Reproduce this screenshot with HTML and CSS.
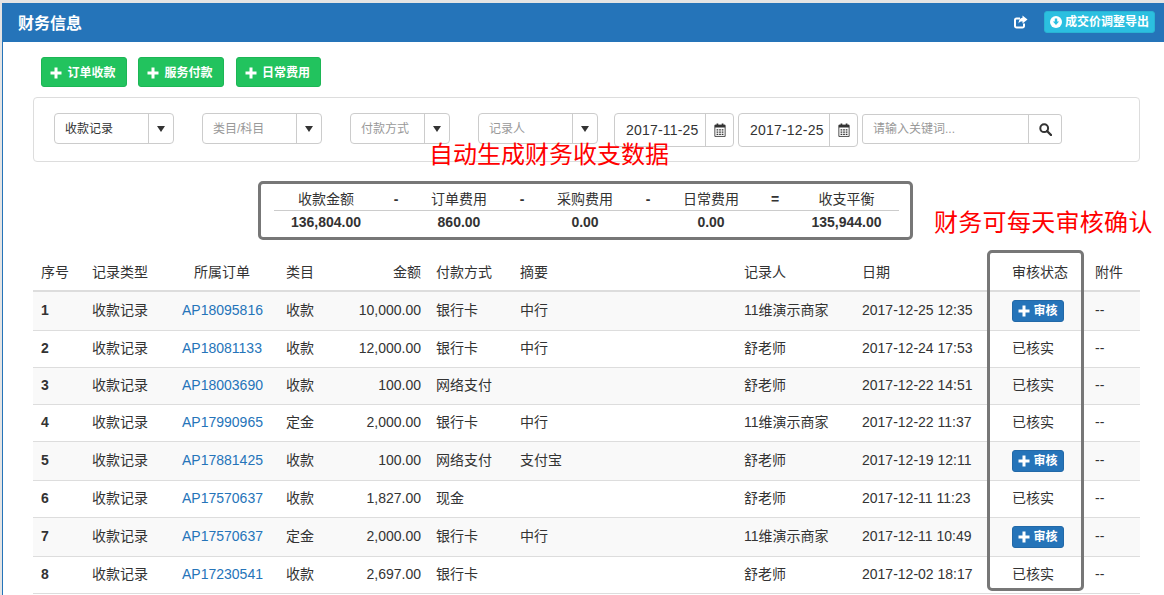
FILE: index.html
```html
<!DOCTYPE html>
<html>
<head>
    <meta charset="utf-8">
    <title>财务信息</title>
    <link rel="stylesheet" href="styles.css">
</head>
<body>
    <div class="panel">
        <div class="panel-head">
            <h1>财务信息</h1>
            <div class="head-tools">
                <svg class="share-icon" width="15" height="14" viewBox="0 0 15 14"><path d="M11 8.500V11a1.500 1.500 0 0 1-1.500 1.500h-6A1.500 1.500 0 0 1 2 11V5a1.500 1.500 0 0 1 1.500-1.500H7" fill="none" stroke="#fff" stroke-width="2"/><path d="M9.500 0.500 14.500 4.500 9.500 8.500V6.300C7.500 6.300 6.400 7 5.600 8.600 5.600 5.600 7 3 9.500 2.800Z" fill="#fff"/></svg>
                <a class="btn-export">
                    <svg width="12" height="12" viewBox="0 0 12 12"><circle cx="6" cy="6" r="6" fill="#fff"/><path d="M4.800 2.600h2.400v3h1.900L6 9 2.900 5.600h1.900z" fill="#2bbfe0"/></svg>
                    成交价调整导出
                </a>
            </div>
        </div>

        <div class="panel-body">
            <div class="actions">
                <a class="btn-add"><svg class="plus" width="12" height="12" viewBox="0 0 12 12"><path d="M4.500 0.500h3v4h4v3h-4v4h-3v-4h-4v-3h4z" fill="#fff"/></svg>订单收款</a>
                <a class="btn-add"><svg class="plus" width="12" height="12" viewBox="0 0 12 12"><path d="M4.500 0.500h3v4h4v3h-4v4h-3v-4h-4v-3h4z" fill="#fff"/></svg>服务付款</a>
                <a class="btn-add btn-last"><svg class="plus" width="12" height="12" viewBox="0 0 12 12"><path d="M4.500 0.500h3v4h4v3h-4v4h-3v-4h-4v-3h4z" fill="#fff"/></svg>日常费用</a>
            </div>

            <div class="filters">
                <div class="picker picker-wide"><span class="picker-text">收款记录</span><span class="picker-caret"></span></div>
                <div class="picker picker-wide"><span class="picker-text muted">类目/科目</span><span class="picker-caret"></span></div>
                <div class="picker picker-small"><span class="picker-text muted">付款方式</span><span class="picker-caret"></span></div>
                <div class="picker picker-wide"><span class="picker-text muted">记录人</span><span class="picker-caret"></span></div>
                <div class="date first-date"><span class="date-text">2017-11-25</span><span class="date-icon"><svg width="12" height="14" viewBox="0 0 14 16"><path d="M1 2.500h12v13H1z" fill="none" stroke="#333"/><path d="M1 2h12v3H1zM3 0.500h2v3H3zM9 0.500h2v3H9z" fill="#333"/><path d="M3 7h2v1.500H3zM6 7h2v1.500H6zM9 7h2v1.500H9zM3 9.700h2v1.500H3zM6 9.700h2v1.500H6zM9 9.700h2v1.500H9zM3 12.400h2v1.500H3zM6 12.400h2v1.500H6zM9 12.400h2v1.500H9z" fill="#333"/></svg></span></div>
                <div class="date"><span class="date-text">2017-12-25</span><span class="date-icon"><svg width="12" height="14" viewBox="0 0 14 16"><path d="M1 2.500h12v13H1z" fill="none" stroke="#333"/><path d="M1 2h12v3H1zM3 0.500h2v3H3zM9 0.500h2v3H9z" fill="#333"/><path d="M3 7h2v1.500H3zM6 7h2v1.500H6zM9 7h2v1.500H9zM3 9.700h2v1.500H3zM6 9.700h2v1.500H6zM9 9.700h2v1.500H9zM3 12.400h2v1.500H3zM6 12.400h2v1.500H6zM9 12.400h2v1.500H9z" fill="#333"/></svg></span></div>
                <div class="search"><span class="search-text">请输入关键词...</span><span class="search-btn"><svg width="13" height="13" viewBox="0 0 13 13"><circle cx="5.200" cy="5.200" r="3.900" fill="none" stroke="#333" stroke-width="2"/><path d="M8 8l4 4" stroke="#333" stroke-width="2.400" stroke-linecap="round"/></svg></span></div>
            </div>

            <div class="summary">
                <table class="summary-table">
                    <colgroup>
                        <col class="s-amount"><col class="s-op"><col class="s-fee"><col class="s-op"><col class="s-fee"><col class="s-op"><col class="s-fee"><col class="s-op2"><col>
                    </colgroup>
                    <tr>
                        <th>收款金额</th><th class="op">-</th><th>订单费用</th><th class="op">-</th><th>采购费用</th><th class="op">-</th><th>日常费用</th><th class="op">=</th><th>收支平衡</th>
                    </tr>
                    <tr>
                        <td>136,804.00</td><td></td><td>860.00</td><td></td><td>0.00</td><td></td><td>0.00</td><td></td><td>135,944.00</td>
                    </tr>
                </table>
            </div>

            <table class="records">
                <colgroup>
                    <col class="c-no"><col class="c-type"><col class="c-order"><col class="c-cat"><col class="c-money"><col class="c-pay"><col class="c-note"><col class="c-user"><col class="c-date"><col class="c-state"><col>
                </colgroup>
                <thead>
                    <tr>
                        <th>序号</th><th>记录类型</th><th class="order-head">所属订单</th><th>类目</th><th class="right">金额</th><th>付款方式</th><th>摘要</th><th>记录人</th><th>日期</th><th>审核状态</th><th>附件</th>
                    </tr>
                </thead>
                <tbody>
                    <tr><td class="num">1</td><td>收款记录</td><td><a class="order">AP18095816</a></td><td>收款</td><td class="right">10,000.00</td><td>银行卡</td><td>中行</td><td>11维演示商家</td><td>2017-12-25 12:35</td><td><a class="btn-check"><svg class="plus" width="12" height="12" viewBox="0 0 12 12"><path d="M4.500 0.500h3v4h4v3h-4v4h-3v-4h-4v-3h4z" fill="#fff"/></svg>审核</a></td><td>--</td></tr>
                    <tr><td class="num">2</td><td>收款记录</td><td><a class="order">AP18081133</a></td><td>收款</td><td class="right">12,000.00</td><td>银行卡</td><td>中行</td><td>舒老师</td><td>2017-12-24 17:53</td><td>已核实</td><td>--</td></tr>
                    <tr><td class="num">3</td><td>收款记录</td><td><a class="order">AP18003690</a></td><td>收款</td><td class="right">100.00</td><td>网络支付</td><td></td><td>舒老师</td><td>2017-12-22 14:51</td><td>已核实</td><td>--</td></tr>
                    <tr><td class="num">4</td><td>收款记录</td><td><a class="order">AP17990965</a></td><td>定金</td><td class="right">2,000.00</td><td>银行卡</td><td>中行</td><td>11维演示商家</td><td>2017-12-22 11:37</td><td>已核实</td><td>--</td></tr>
                    <tr><td class="num">5</td><td>收款记录</td><td><a class="order">AP17881425</a></td><td>收款</td><td class="right">100.00</td><td>网络支付</td><td>支付宝</td><td>舒老师</td><td>2017-12-19 12:11</td><td><a class="btn-check"><svg class="plus" width="12" height="12" viewBox="0 0 12 12"><path d="M4.500 0.500h3v4h4v3h-4v4h-3v-4h-4v-3h4z" fill="#fff"/></svg>审核</a></td><td>--</td></tr>
                    <tr><td class="num">6</td><td>收款记录</td><td><a class="order">AP17570637</a></td><td>收款</td><td class="right">1,827.00</td><td>现金</td><td></td><td>舒老师</td><td>2017-12-11 11:23</td><td>已核实</td><td>--</td></tr>
                    <tr><td class="num">7</td><td>收款记录</td><td><a class="order">AP17570637</a></td><td>定金</td><td class="right">2,000.00</td><td>银行卡</td><td>中行</td><td>11维演示商家</td><td>2017-12-11 10:49</td><td><a class="btn-check"><svg class="plus" width="12" height="12" viewBox="0 0 12 12"><path d="M4.500 0.500h3v4h4v3h-4v4h-3v-4h-4v-3h4z" fill="#fff"/></svg>审核</a></td><td>--</td></tr>
                    <tr><td class="num">8</td><td>收款记录</td><td><a class="order">AP17230541</a></td><td>收款</td><td class="right">2,697.00</td><td>银行卡</td><td></td><td>舒老师</td><td>2017-12-02 18:17</td><td>已核实</td><td>--</td></tr>
                </tbody>
            </table>
        </div>
    </div>

    <!-- red notes and the grey frame drawn on top of the screenshot -->
    <div class="note note-auto">自动生成财务收支数据</div>
    <div class="note note-daily">财务可每天审核确认</div>
    <div class="state-frame"></div>
</body>
</html>
```

FILE: styles.css
```css
html, body { height: 595px; overflow: hidden; }
body { margin: 0; padding-top: 3px; box-sizing: border-box; background: #e4e4e4; color: #333; font-family: "Liberation Sans", "Noto Sans CJK SC", sans-serif; font-size: 14px; line-height: 20px; position: relative; }
a { text-decoration: none; }

.panel { margin-left: 2px; background: #fff; border-left: 1px solid #2574b9; height: 592px; }
.panel-head { height: 39px; background: #2574b9; display: flex; align-items: center; justify-content: space-between; padding: 0 9px 0 15px; }
.panel-head h1 { margin: 2px 0 0; font-size: 16px; font-weight: bold; color: #fff; }
.head-tools { display: flex; align-items: center; }
.share-icon { margin-right: 16px; margin-top: -2px; }
.btn-export { display: flex; align-items: center; gap: 3px; width: 111px; height: 22px; box-sizing: border-box; padding-left: 5px; margin-top: -1px; background: #2bbfe0; border: 1px solid #29b3d2; border-radius: 3px; color: #fff; font-size: 12px; font-weight: bold; }

.panel-body { padding: 15px 24px 0 30px; }
.actions { display: flex; gap: 11px; padding-left: 8px; }
.btn-add { display: flex; align-items: center; justify-content: center; width: 86px; height: 30px; box-sizing: border-box; padding: 1px 2px 0 0; background: #22c35e; border: 1px solid #1cb655; border-radius: 3px; color: #fff; font-size: 12px; font-weight: bold; }
.btn-last { width: 85px; margin-left: 1px; }
.plus { margin-right: 5px; }

.filters { display: flex; align-items: flex-start; margin-top: 10px; height: 65px; box-sizing: border-box; padding: 15px 0 0 20px; border: 1px solid #ddd; border-radius: 4px; }
.picker { display: flex; height: 31px; box-sizing: border-box; margin-right: 28px; background: #fff; border: 1px solid #ccc; border-radius: 4px; font-size: 12px; }
.picker-wide { width: 120px; }
.picker-small { width: 100px; }
.picker-text { flex: 1; padding: 1px 0 0 10px; line-height: 29px; }
.muted { color: #999; }
.picker-caret { width: 24px; border-left: 1px solid #ccc; position: relative; }
.picker-caret::after { content: ""; position: absolute; left: 8px; top: 12px; border: 4px solid transparent; border-top: 6px solid #333; border-bottom: 0; }
.filters .picker:nth-child(4) { margin-right: 16px; }

.date { display: flex; width: 120px; height: 34px; box-sizing: border-box; margin-right: 4px; border: 1px solid #ccc; border-radius: 4px; }
.date-text { flex: 1; padding-left: 11px; line-height: 32px; letter-spacing: 0.2px; }
.date-icon { width: 27px; border-left: 1px solid #ccc; display: flex; align-items: center; justify-content: center; }
.search { display: flex; width: 200px; height: 30px; box-sizing: border-box; margin-top: 1px; border: 1px solid #ccc; border-radius: 3px; font-size: 12px; color: #999; }
.search-text { flex: 1; padding-left: 10px; line-height: 28px; }
.search-btn { width: 32px; border-left: 1px solid #ccc; display: flex; align-items: center; justify-content: center; }

.summary { width: 655px; height: 59px; box-sizing: border-box; margin: 19px 0 0 225px; padding: 6px 12px 0 13px; border: 3px solid #777; border-radius: 5px; }
.summary-table { width: 625px; table-layout: fixed; border-collapse: collapse; }
.summary-table th { padding: 0 0 2px; height: 18px; line-height: 18px; font-weight: normal; text-align: center; border-bottom: 1px solid #ccc; box-sizing: border-box; }
.summary-table .op { font-weight: bold; }
.summary-table td { padding: 0; height: 21px; font-weight: bold; text-align: center; }
.s-amount { width: 104px; }
.s-op { width: 36px; }
.s-op2 { width: 38px; }
.s-fee { width: 90px; }

.records { width: 1107px; margin-top: 14px; table-layout: fixed; border-collapse: collapse; }
.records th { padding: 8px; text-align: left; font-weight: normal; border-bottom: 2px solid #ddd; }
.records td { padding: 7px 8px 9px; border-bottom: 1px solid #ddd; white-space: nowrap; }
.records tbody tr:nth-child(odd) { background: #f9f9f9; }
.records .order-head { padding-left: 20px; }
.records .right { text-align: right; padding-right: 7px; }
.records .num { font-weight: bold; }
.c-no { width: 51px; }
.c-type { width: 90px; }
.c-order { width: 104px; }
.c-cat { width: 60px; }
.c-money { width: 90px; }
.c-pay { width: 84px; }
.c-note { width: 224px; }
.c-user { width: 118px; }
.c-date { width: 150px; }
.c-state { width: 83px; }
.order { color: #2574b9; }
.btn-check { display: flex; align-items: center; justify-content: center; width: 52px; height: 22px; margin: 1px 0 -1px; box-sizing: border-box; background: #2574b9; border: 1px solid #2269a8; border-radius: 3px; color: #fff; font-size: 12px; font-weight: bold; }
.btn-check .plus { margin-right: 3px; }

.note { position: absolute; color: #f00; font-size: 24px; line-height: 28px; white-space: nowrap; }
.note-auto { left: 429px; top: 141px; }
.note-daily { left: 934px; top: 209px; letter-spacing: 0.3px; }
.state-frame { position: absolute; left: 987px; top: 250px; width: 97px; height: 341px; box-sizing: border-box; border: 3px solid #777; border-radius: 5px; }
```
